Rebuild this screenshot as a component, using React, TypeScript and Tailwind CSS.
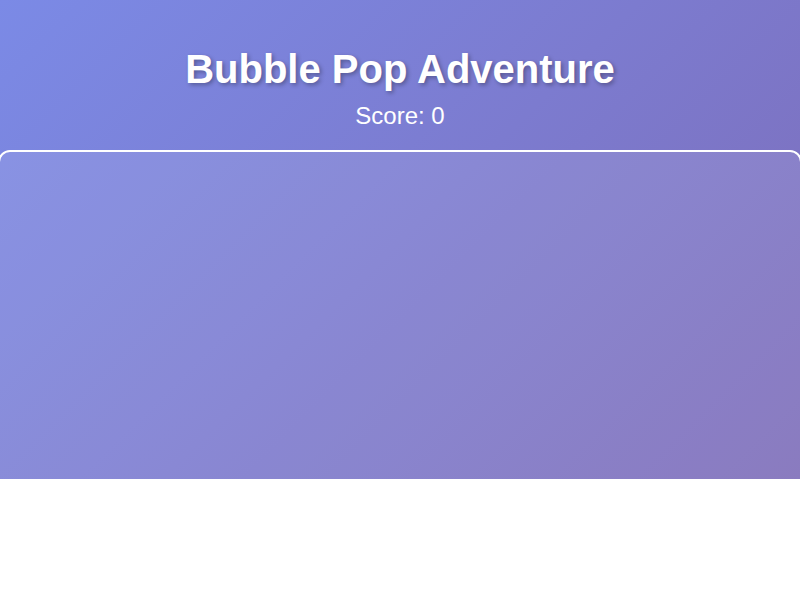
export default function App() {
  const score = 0

  return (
    <div
      className="h-[479px] overflow-hidden bg-[linear-gradient(135deg,#7b8ae6_0%,#7d6cb8_100%)] text-white"
      style={{ fontFamily: '"Liberation Sans", Arial, sans-serif' }}
    >
      {/* Header */}
      <div className="text-center">
        <h1 className="pt-[46px] text-[40px] leading-[46px] font-bold [text-shadow:2px_2px_4px_rgba(0,0,0,0.3)]">
          Bubble Pop Adventure
        </h1>
        <p className="mt-[10px] text-[24px] leading-[28px]">Score: {score}</p>
      </div>

      {/* Game area */}
      <div className="-mx-[2px] mt-[20px] h-[400px] rounded-[12px] border-2 border-white bg-white/10" />
    </div>
  )
}
